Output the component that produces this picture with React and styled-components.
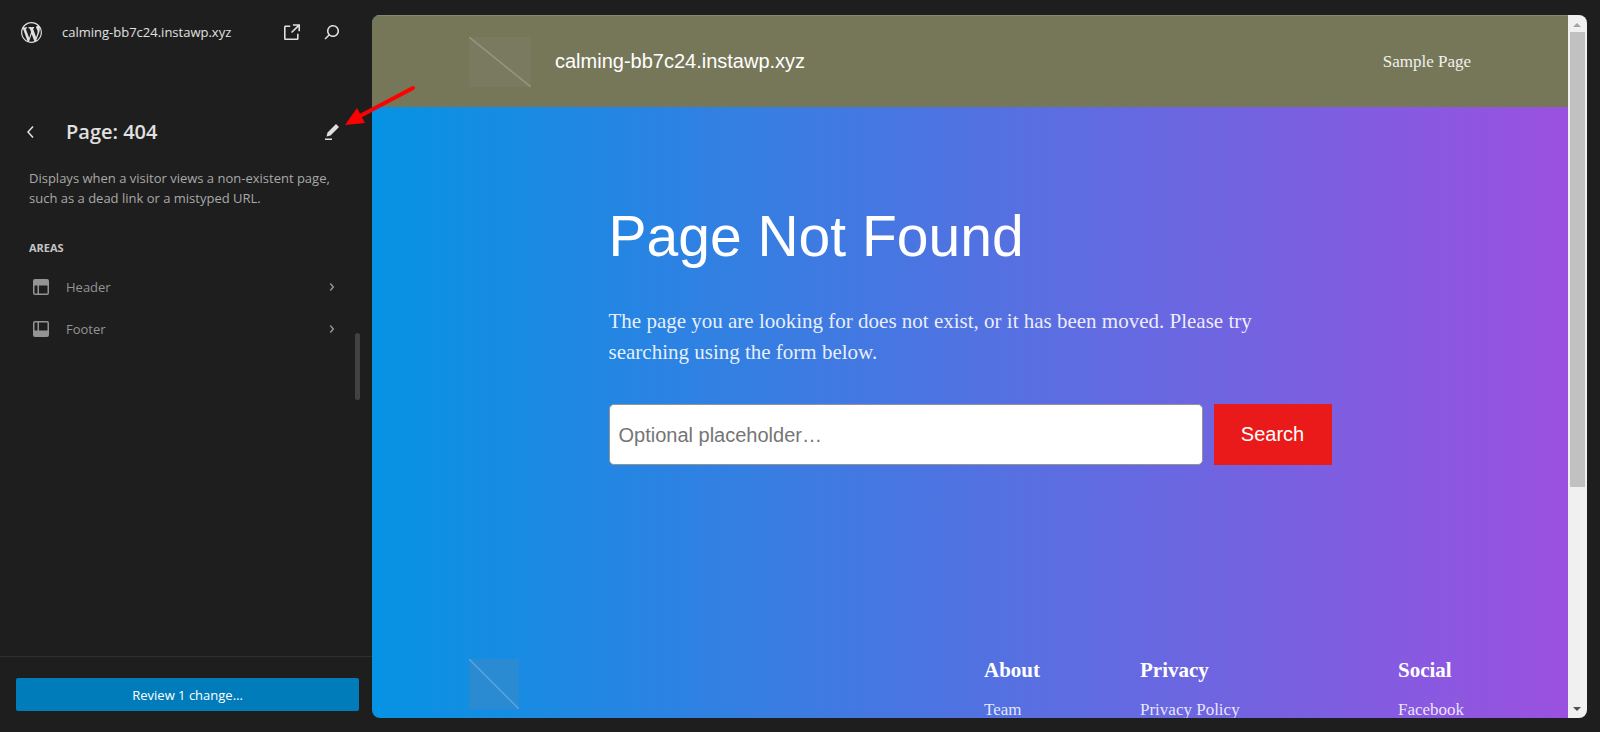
import React from "react";
import styled, { createGlobalStyle } from "styled-components";

const ui = `"Open Sans", "Noto Sans", sans-serif`;
const sans = `"Liberation Sans", Arial, sans-serif`;
const serif = `"Liberation Serif", "Times New Roman", serif`;

const GlobalStyle = createGlobalStyle`
  *, *::before, *::after { box-sizing: border-box; }
  body { margin: 0; background: #1e1e1e; }
  h1, h2, p, ul { margin: 0; padding: 0; }
  ul { list-style: none; }
  a { color: inherit; text-decoration: none; }
  button, input { font: inherit; }
`;

const Shell = styled.div`
  display: grid;
  grid-template-columns: 372px minmax(0, 1fr);
  height: 100vh;
  background: #1e1e1e;
  color: #e0e0e0;
  font-family: ${ui};
  font-size: 13px;
`;

const Sidebar = styled.aside`
  display: flex;
  flex-direction: column;
  min-height: 0;
`;

const Hub = styled.header`
  display: flex;
  align-items: center;
  height: 64px;
  padding: 0 28px 0 19px;
`;

const SiteName = styled.a`
  flex: 1;
  margin-left: 18px;
  font-weight: 500;
`;

const IconButton = styled.button`
  display: flex;
  padding: 0;
  border: 0;
  background: none;
  color: inherit;
  cursor: pointer;
`;

const HubActions = styled.div`
  display: flex;
  gap: 16px;
`;

const Icon = styled.svg`
  display: block;
  flex: none;
  width: ${(p) => p.$size || 24}px;
  height: ${(p) => p.$size || 24}px;
  fill: currentColor;
`;

const ScrollArea = styled.div`
  display: flex;
  flex: 1;
  min-height: 0;
`;

const Panel = styled.main`
  flex: 1;
  padding: 52px 0 0 19px;
`;

const TitleRow = styled.div`
  display: flex;
  align-items: center;
  height: 32px;
  padding-right: 7px;
`;

const Title = styled.h1`
  flex: 1;
  margin-left: 23px;
  font-size: 20px;
  line-height: 32px;
  font-weight: 600;
`;

const Description = styled.p`
  margin: 20px 0 0 10px;
  color: #a9a9a9;
  font-size: 13px;
  line-height: 20px;
  white-space: nowrap;
`;

const SectionTitle = styled.h2`
  margin: 32px 0 0 10px;
  color: #c4c4c4;
  font-size: 11px;
  line-height: 16px;
  font-weight: 700;
  text-transform: uppercase;
`;

const AreaLink = styled.a`
  display: flex;
  align-items: center;
  height: 42px;
  padding: 0 7px 0 10px;
  color: #949494;
`;

const AreaList = styled.ul`
  margin-top: 10px;
`;

const AreaName = styled.span`
  flex: 1;
  margin-left: 13px;
`;

const SideTrack = styled.div`
  width: 21px;
  padding: 269px 4px 0;
`;

const SideThumb = styled.div`
  width: 5px;
  height: 67px;
  border-radius: 3px;
  background: #424242;
`;

const SaveBar = styled.footer`
  padding: 21px 13px 21px 16px;
  border-top: 1px solid #2f2f2f;
`;

const SaveButton = styled.button`
  width: 100%;
  height: 33px;
  border: 0;
  border-radius: 2px;
  background: #007cba;
  color: #fff;
  font-size: 13px;
  cursor: pointer;
`;

const Frame = styled.section`
  display: flex;
  min-width: 0;
  margin: 15px 13px 14px 0;
  border-radius: 8px;
  overflow: hidden;
`;

const Site = styled.div`
  display: flex;
  flex: 1;
  flex-direction: column;
  min-width: 0;
  overflow: hidden;
  background: linear-gradient(90deg, #0693e3, #9b51e0);
  color: #fff;
  font-family: ${serif};
`;

const SiteHeader = styled.header`
  display: flex;
  flex: none;
  align-items: center;
  height: 92px;
  padding: 0 97px;
  border-top: 1px solid #88886f;
  background: #767759;
`;

const LogoPlaceholder = styled.svg`
  display: block;
  width: ${(p) => p.$width}px;
  height: 50px;
  background: ${(p) => p.$fill};
  stroke: ${(p) => p.$stroke};
  stroke-width: 1.5;
`;

const SiteTitle = styled.a`
  flex: 1;
  margin-left: 24px;
  font-family: ${sans};
  font-size: 20px;
`;

const NavLink = styled.a`
  font-size: 17px;
  color: #f1f1ee;
`;

const Content = styled.div`
  flex: none;
  width: 100%;
  max-width: 723px;
  margin: 0 auto;
  padding-top: 94px;
`;

const Heading = styled.h1`
  font-family: ${sans};
  font-size: 57px;
  line-height: 70px;
  font-weight: 400;
`;

const Lead = styled.p`
  margin: 35px 0 36px;
  padding-right: 48px;
  font-size: 21px;
  line-height: 31px;
  color: rgba(255, 255, 255, 0.9);
`;

const SearchForm = styled.form`
  display: flex;
  gap: 11px;
  font-family: ${sans};
  font-size: 20px;
`;

const SearchInput = styled.input`
  flex: 1;
  min-width: 0;
  height: 61px;
  padding: 2px 9px 0;
  border: 1px solid #949494;
  border-radius: 5px;
  background: #fff;
  &::placeholder { color: #757575; opacity: 1; }
`;

const SearchButton = styled.button`
  width: 118px;
  border: 0;
  background: #eb1a1a;
  color: #fff;
`;

const SiteFooter = styled.footer`
  display: grid;
  flex: none;
  grid-template-columns: minmax(0, 1fr) 156px 258px 73px;
  margin-top: 189px;
  padding: 0 97px;
`;

const FooterLogo = styled.div`
  padding-top: 5px;
`;

const FooterColumn = styled.div`
  white-space: nowrap;
`;

const FooterTitle = styled.h2`
  font-size: 21px;
  line-height: 32px;
  font-weight: 700;
`;

const FooterLink = styled.a`
  display: block;
  margin-top: 14px;
  font-size: 17px;
  line-height: 20px;
  color: rgba(255, 255, 255, 0.85);
`;

const Scrollbar = styled.div`
  display: flex;
  flex-direction: column;
  align-items: center;
  width: 19px;
  background: #f0f0f0;
`;

const ScrollArrow = styled.svg`
  flex: none;
  width: 19px;
  height: 17px;
  fill: ${(p) => p.$color};
`;

const ScrollTrack = styled.div`
  flex: 1;
  width: 15px;
`;

const ScrollThumb = styled.div`
  height: 68%;
  background: #c1c1c1;
`;

const Pointer = styled.svg`
  position: absolute;
  left: 340px;
  top: 80px;
  width: 80px;
  height: 50px;
  pointer-events: none;
`;

const icons = {
  wordpress:
    "M20 10c0-5.51-4.49-10-10-10C4.48 0 0 4.49 0 10c0 5.52 4.48 10 10 10 5.51 0 10-4.48 10-10zM7.78 15.37L4.37 6.22c.55-.02 1.17-.08 1.17-.08.5-.06.44-1.13-.06-1.11 0 0-1.45.11-2.37.11-.18 0-.37 0-.58-.01C4.12 2.69 6.87 1.11 10 1.11c2.33 0 4.45.87 6.05 2.34-.68-.11-1.65.39-1.65 1.58 0 .74.45 1.36.9 2.1.35.61.55 1.36.55 2.46 0 1.49-1.4 5-1.4 5l-3.03-8.37c.54-.02.82-.17.82-.17.5-.05.44-1.25-.06-1.22 0 0-1.44.12-2.38.12-.87 0-2.33-.12-2.33-.12-.5-.03-.56 1.2-.06 1.22l.92.08 1.26 3.41zM17.41 10c.24-.64.74-1.87.43-4.25.7 1.29 1.05 2.71 1.05 4.25 0 3.29-1.73 6.24-4.4 7.78.97-2.59 1.94-5.2 2.92-7.78zM6.1 18.09C3.12 16.65 1.11 13.53 1.11 10c0-1.3.23-2.48.72-3.59C3.25 10.3 4.67 14.2 6.1 18.09zm4.03-6.63l2.58 6.98c-.86.29-1.76.45-2.71.45-.79 0-1.57-.11-2.29-.33.81-2.38 1.62-4.74 2.42-7.1z",
  external:
    "M12.9 4.2v1.6h4.3l-6.2 6.2 1.1 1.1 6.3-6.2v4.3H20V4.2h-7.1zM5.6 5.4c-.9 0-1.6.7-1.6 1.6v11.4c0 .9.7 1.6 1.6 1.6H17c.9 0 1.6-.7 1.6-1.6v-4.6H17v4.6H5.6V7h4.6V5.4H5.6z",
  search:
    "M13 5c-3.3 0-6 2.7-6 6 0 1.4.5 2.7 1.3 3.7l-3.8 3.8 1.1 1.1 3.8-3.8c1 .8 2.3 1.3 3.7 1.3 3.3 0 6-2.7 6-6S16.3 5 13 5zm0 10.5c-2.5 0-4.5-2-4.5-4.5s2-4.5 4.5-4.5 4.5 2 4.5 4.5-2 4.5-4.5 4.5z",
  back: "M14.6 7l-1.2-1L8 12l5.4 6 1.2-1-4.6-5z",
  edit: "m19 7-3-3-8.5 8.5-1 4 4-1L19 7Zm-7 11.5H5V20h7v-1.5Z",
  header:
    "M18.5 10.5H10v8h8a.5.5 0 00.5-.5v-7.5zm-10 0h-3V18a.5.5 0 00.5.5h2.5v-8zM6 4h12a2 2 0 012 2v12a2 2 0 01-2 2H6a2 2 0 01-2-2V6a2 2 0 012-2z",
  footer:
    "M18 5.5h-8v8h8.5V6a.5.5 0 00-.5-.5zm-9.5 8h-3V6a.5.5 0 01.5-.5h2.5v8zM6 4h12a2 2 0 012 2v12a2 2 0 01-2 2H6a2 2 0 01-2-2V6a2 2 0 012-2z",
  next: "M10.86 8.04L14.28 12.03L10.86 16.02L9.72 15.04L12.3 12.03L9.72 9.02Z",
};

function Glyph({ name, size, viewBox = "0 0 24 24" }) {
  return (
    <Icon $size={size} viewBox={viewBox} aria-hidden="true">
      <path fillRule="evenodd" d={icons[name]} />
    </Icon>
  );
}

const areas = [
  { name: "Header", icon: "header" },
  { name: "Footer", icon: "footer" },
];

const footerColumns = [
  { title: "About", link: "Team" },
  { title: "Privacy", link: "Privacy Policy" },
  { title: "Social", link: "Facebook" },
];

export default function App() {
  return (
    <>
      <GlobalStyle />
      <Shell>
        <Sidebar>
          <Hub>
            <IconButton type="button" aria-label="Open dashboard">
              <Glyph name="wordpress" size={25} viewBox="-2 -2 24 24" />
            </IconButton>
            <SiteName href="#site">calming-bb7c24.instawp.xyz</SiteName>
            <HubActions>
              <IconButton type="button" aria-label="View site">
                <Glyph name="external" />
              </IconButton>
              <IconButton type="button" aria-label="Search commands">
                <Glyph name="search" />
              </IconButton>
            </HubActions>
          </Hub>
          <ScrollArea>
            <Panel>
              <TitleRow>
                <IconButton type="button" aria-label="Back">
                  <Glyph name="back" />
                </IconButton>
                <Title>Page: 404</Title>
                <IconButton type="button" aria-label="Edit">
                  <Glyph name="edit" />
                </IconButton>
              </TitleRow>
              <Description>
                Displays when a visitor views a non-existent page,
                <br />
                such as a dead link or a mistyped URL.
              </Description>
              <SectionTitle>Areas</SectionTitle>
              <AreaList>
                {areas.map((area) => (
                  <li key={area.name}>
                    <AreaLink href={`#${area.icon}`}>
                      <Glyph name={area.icon} />
                      <AreaName>{area.name}</AreaName>
                      <Glyph name="next" />
                    </AreaLink>
                  </li>
                ))}
              </AreaList>
            </Panel>
            <SideTrack>
              <SideThumb />
            </SideTrack>
          </ScrollArea>
          <SaveBar>
            <SaveButton type="button">Review 1 change…</SaveButton>
          </SaveBar>
        </Sidebar>

        <Frame aria-label="Page preview">
          <Site>
            <SiteHeader>
              <LogoPlaceholder
                $width={62}
                $fill="#7a7a60"
                $stroke="#96967f"
                viewBox="0 0 62 50"
                aria-hidden="true"
              >
                <path d="M0 0L62 50" />
              </LogoPlaceholder>
              <SiteTitle href="#home">calming-bb7c24.instawp.xyz</SiteTitle>
              <nav>
                <NavLink href="#sample">Sample Page</NavLink>
              </nav>
            </SiteHeader>
            <Content>
              <Heading>Page Not Found</Heading>
              <Lead>
                The page you are looking for does not exist, or it has been moved. Please try
                searching using the form below.
              </Lead>
              <SearchForm onSubmit={(e) => e.preventDefault()}>
                <SearchInput
                  type="text"
                  aria-label="Search"
                  placeholder="Optional placeholder…"
                />
                <SearchButton type="submit">Search</SearchButton>
              </SearchForm>
            </Content>
            <SiteFooter>
              <FooterLogo>
                <LogoPlaceholder
                  $width={50}
                  $fill="#2b8bd2"
                  $stroke="#5aa5df"
                  viewBox="0 0 50 50"
                  aria-hidden="true"
                >
                  <path d="M0 0L50 50" />
                </LogoPlaceholder>
              </FooterLogo>
              {footerColumns.map((column) => (
                <FooterColumn key={column.title}>
                  <FooterTitle>{column.title}</FooterTitle>
                  <FooterLink href={`#${column.link}`}>{column.link}</FooterLink>
                </FooterColumn>
              ))}
            </SiteFooter>
          </Site>
          <Scrollbar aria-hidden="true">
            <ScrollArrow $color="#a3a3a3" viewBox="0 0 19 17">
              <path d="M5 12h8L9 8z" />
            </ScrollArrow>
            <ScrollTrack>
              <ScrollThumb />
            </ScrollTrack>
            <ScrollArrow $color="#505050" viewBox="0 0 19 17">
              <path d="M5 6h8L9 10z" />
            </ScrollArrow>
          </Scrollbar>
        </Frame>
      </Shell>
      <Pointer viewBox="0 0 80 50" aria-hidden="true">
        <path d="M73 8L20 36" stroke="#f00" strokeWidth="4" strokeLinecap="round" />
        <path d="M5 45L17 28L25 43Z" fill="#f00" />
      </Pointer>
    </>
  );
}
